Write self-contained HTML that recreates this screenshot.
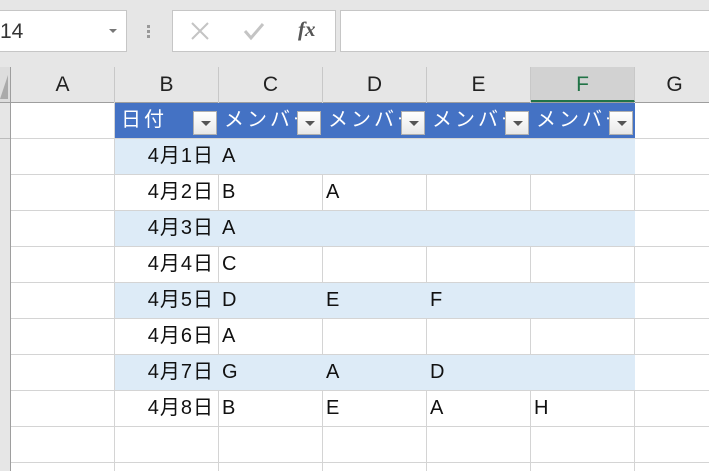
<!DOCTYPE html>
<html><head><meta charset="utf-8"><style>
*{margin:0;padding:0;box-sizing:border-box}
body{width:709px;height:471px;overflow:hidden;background:#fff;position:relative;font-family:"Liberation Sans","Noto Sans CJK JP",sans-serif}
.a{position:absolute}
.top{left:0;top:0;width:709px;height:102px;background:#e6e6e6}
.box{background:#fff;border:1px solid #c6c6c6;height:42px;top:10px}
.ch{top:67px;height:35px;font-size:21px;color:#222;text-align:center;line-height:35px;border-right:1px solid #c8c8c8}
.hl{left:11px;width:698px;height:1px;background:#d4d4d4}
.vl{top:102px;width:1px;height:369px;background:#d4d4d4}
.cell{height:36px;line-height:36px;font-size:20px;color:#111;letter-spacing:1px}
.fb{width:24px;height:24px;top:111px;background:linear-gradient(#fff,#e8e8e8);border:1px solid #b0b0b0}
.fb:after{content:"";position:absolute;left:7px;top:9px;border-left:5px solid transparent;border-right:5px solid transparent;border-top:5px solid #555}
.hd{top:103px;height:34px;line-height:34px;color:#fff;font-size:20px;letter-spacing:3px;white-space:nowrap;overflow:hidden}
</style></head><body>
<div class="a top"></div>
<div class="a box" style="left:-1px;width:128px"></div>
<div class="a" style="left:0;top:20px;font-size:21px;color:#333">14</div>
<div class="a" style="left:109px;top:29px;border-left:4px solid transparent;border-right:4px solid transparent;border-top:4px solid #777"></div>
<div class="a" style="left:147px;top:25px;width:3px;height:14px;background:repeating-linear-gradient(#999 0 3px,transparent 3px 5px)"></div>
<div class="a box" style="left:172px;width:164px"></div>
<svg class="a" style="left:190px;top:21px" width="20" height="20"><path d="M2 2L18 18M18 2L2 18" stroke="#c4c4c4" stroke-width="2"/></svg>
<svg class="a" style="left:243px;top:21px" width="22" height="20"><path d="M2 10L8 17L20 3" stroke="#c4c4c4" stroke-width="3" fill="none"/></svg>
<div class="a" style="left:298px;top:17px;font-size:21px;color:#555;font-family:'Liberation Serif',serif;font-style:italic;font-weight:bold">fx</div>
<div class="a box" style="left:340px;width:372px"></div>
<div class="a" style="left:0;top:67px;width:10px;height:35px;background:#ddd"></div>
<div class="a" style="left:0;top:75px;width:8px;height:24px;background:#aaa;clip-path:polygon(100% 0,100% 100%,0 100%)"></div>
<div class="a ch" style="left:11px;width:104px">A</div>
<div class="a ch" style="left:115px;width:104px">B</div>
<div class="a ch" style="left:219px;width:104px">C</div>
<div class="a ch" style="left:323px;width:104px">D</div>
<div class="a ch" style="left:427px;width:104px">E</div>
<div class="a ch" style="left:531px;width:104px;background:#d2d2d2;border-bottom:2px solid #217346;color:#217346">F</div>
<div class="a ch" style="left:635px;width:80px">G</div>
<div class="a" style="left:0;top:102px;width:709px;height:1px;background:#9e9e9e"></div>
<div class="a" style="left:0;top:103px;width:10px;height:368px;background:#e6e6e6"></div>
<div class="a" style="left:10px;top:67px;width:1px;height:404px;background:#9e9e9e"></div>
<div class="a vl" style="left:114px"></div><div class="a vl" style="left:218px"></div><div class="a vl" style="left:322px"></div><div class="a vl" style="left:426px"></div><div class="a vl" style="left:530px"></div><div class="a vl" style="left:634px"></div>
<div class="a" style="left:115px;top:138px;width:520px;height:36px;background:#ddebf7"></div>
<div class="a" style="left:115px;top:210px;width:520px;height:36px;background:#ddebf7"></div>
<div class="a" style="left:115px;top:282px;width:520px;height:36px;background:#ddebf7"></div>
<div class="a" style="left:115px;top:354px;width:520px;height:36px;background:#ddebf7"></div>
<div class="a hl" style="top:138px"></div><div class="a hl" style="top:174px"></div><div class="a hl" style="top:210px"></div><div class="a hl" style="top:246px"></div><div class="a hl" style="top:282px"></div><div class="a hl" style="top:318px"></div><div class="a hl" style="top:354px"></div><div class="a hl" style="top:390px"></div><div class="a hl" style="top:426px"></div><div class="a hl" style="top:462px"></div>
<div class="a" style="left:0;top:138px;width:10px;height:1px;background:#bbb"></div>
<div class="a" style="left:115px;top:103px;width:520px;height:35px;background:#4472c4"></div>
<div class="a hd" style="left:121px;width:70px">日付</div>
<div class="a hd" style="left:224px;width:90px">メンバー</div>
<div class="a hd" style="left:328px;width:90px">メンバー</div>
<div class="a hd" style="left:432px;width:90px">メンバー</div>
<div class="a hd" style="left:536px;width:90px">メンバー</div>
<div class="a fb" style="left:193px"></div><div class="a fb" style="left:297px"></div><div class="a fb" style="left:401px"></div><div class="a fb" style="left:505px"></div><div class="a fb" style="left:609px"></div>
<div class="a" style="left:115px;top:138px;width:99px;text-align:right">
<div class="cell">4月1日</div><div class="cell">4月2日</div><div class="cell">4月3日</div><div class="cell">4月4日</div><div class="cell">4月5日</div><div class="cell">4月6日</div><div class="cell">4月7日</div><div class="cell">4月8日</div></div>
<div class="a" style="left:222px;top:138px"><div class="cell">A</div><div class="cell">B</div><div class="cell">A</div><div class="cell">C</div><div class="cell">D</div><div class="cell">A</div><div class="cell">G</div><div class="cell">B</div></div>
<div class="a cell" style="left:326px;top:174px">A</div>
<div class="a cell" style="left:326px;top:282px">E</div>
<div class="a cell" style="left:326px;top:354px">A</div>
<div class="a cell" style="left:326px;top:390px">E</div>
<div class="a cell" style="left:430px;top:282px">F</div>
<div class="a cell" style="left:430px;top:354px">D</div>
<div class="a cell" style="left:430px;top:390px">A</div>
<div class="a cell" style="left:534px;top:390px">H</div>
</body></html>
